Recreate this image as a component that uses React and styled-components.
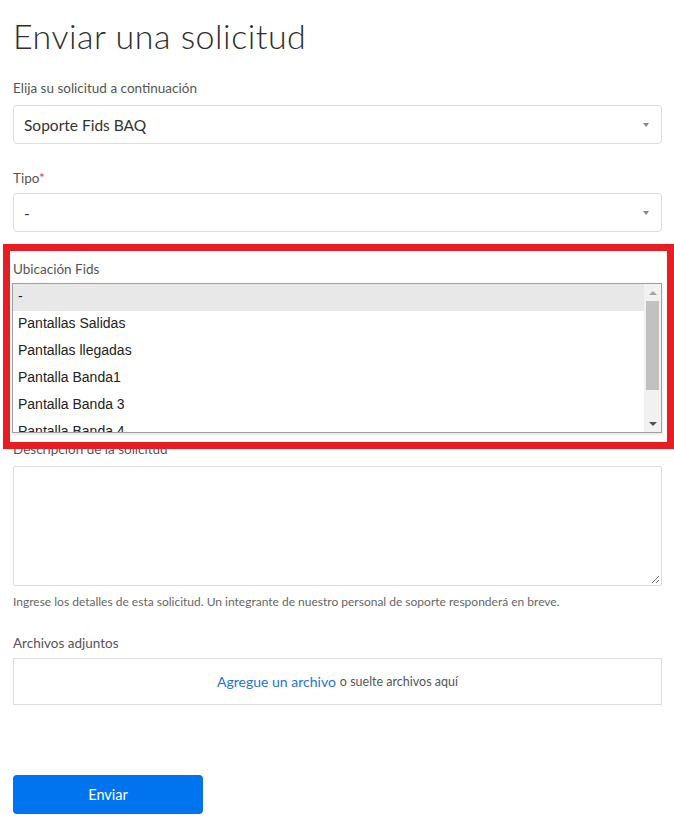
import styled, { createGlobalStyle } from 'styled-components';

const GlobalStyle = createGlobalStyle`
  * { box-sizing: border-box; }
  body {
    margin: 0;
    background: #fff;
    font-family: 'Lato', 'Open Sans', sans-serif;
    color: #333;
  }
`;

const Page = styled.div`
  position: relative;
  width: 674px;
  padding: 16px 12px 20px 13px;
`;

const Title = styled.h1`
  margin: 0 0 23px;
  font-size: 34px;
  font-weight: 300;
  letter-spacing: 0.5px;
  color: #2e2e2e;
  line-height: 40px;
`;

const Field = styled.div`
  display: flex;
  flex-direction: column;
  margin-bottom: ${(p) => p.mb || 0}px;
`;

const Label = styled.label`
  font-size: 13.5px;
  color: #555;
  line-height: 18px;
  margin-bottom: ${(p) => p.gap || 8}px;
`;

const Star = styled.span`
  color: #e23a3a;
`;

const SelectBox = styled.div`
  height: 39px;
  border: 1px solid #ddd;
  border-radius: 4px;
  display: flex;
  align-items: center;
  justify-content: space-between;
  padding: 0 12px 0 10px;
  font-size: 15.5px;
  color: #333;
`;

const Caret = styled.span`
  width: 0;
  height: 0;
  border-left: 3px solid transparent;
  border-right: 3px solid transparent;
  border-top: 4px solid #888;
`;

const ListBox = styled.div`
  display: flex;
  height: 150px;
  margin-left: -1px;
  border: 1px solid #a0a0a0;
  box-shadow: 0 1px 3px rgba(0, 0, 0, 0.15);
  font-family: 'Liberation Sans', Arial, sans-serif;
  font-size: 14px;
  color: #222;
`;

const Options = styled.div`
  flex: 1;
  overflow: hidden;
`;

const Option = styled.div`
  height: 27px;
  padding: 4px 0 0 5px;
  line-height: 16px;
  background: ${(p) => (p.selected ? '#e8e8e8' : '#fff')};
`;

const ScrollTrack = styled.div`
  width: 17px;
  background: #f1f1f1;
  display: flex;
  flex-direction: column;
  align-items: center;
`;

const Arrow = styled.div`
  height: 17px;
  width: 17px;
  display: flex;
  align-items: center;
  justify-content: center;
  &::after {
    content: '';
    border-left: 4px solid transparent;
    border-right: 4px solid transparent;
    ${(p) =>
      p.up
        ? `border-bottom: 4px solid ${p.dim ? '#a3a3a3' : '#505050'};`
        : `border-top: 4px solid ${p.dim ? '#a3a3a3' : '#505050'};`}
  }
`;

const ThumbArea = styled.div`
  flex: 1;
  width: 100%;
  padding: 0 2px;
`;

const Thumb = styled.div`
  height: 89px;
  background: #c1c1c1;
`;

const TextArea = styled.div`
  position: relative;
  height: 120px;
  border: 1px solid #ddd;
  border-radius: 2px;
`;

const Grip = styled.svg`
  position: absolute;
  right: 1px;
  bottom: 1px;
`;

const Help = styled.div`
  font-size: 12px;
  color: #666;
  margin-top: 8px;
  line-height: 16px;
`;

const Drop = styled.div`
  height: 47px;
  border: 1px solid #ddd;
  display: flex;
  align-items: center;
  justify-content: center;
  gap: 4px;
`;

const DropLink = styled.span`
  color: #1f73d6;
  font-size: 14px;
`;

const DropText = styled.span`
  color: #555;
  font-size: 12.5px;
`;

const Button = styled.button`
  width: 190px;
  height: 39px;
  border: none;
  border-radius: 4px;
  background: #0074ee;
  color: #fff;
  font-family: inherit;
  font-size: 14.5px;
`;

const Highlight = styled.div`
  position: absolute;
  left: 3px;
  top: 244px;
  width: 671px;
  height: 205px;
  border: 7px solid #e61e24;
  pointer-events: none;
`;

const options = [
  '-',
  'Pantallas Salidas',
  'Pantallas llegadas',
  'Pantalla Banda1',
  'Pantalla Banda 3',
  'Pantalla Banda 4',
];

export default function App() {
  return (
    <>
      <GlobalStyle />
      <Page>
        <Title>Enviar una solicitud</Title>
        <Field mb={25}>
          <Label gap={8}>Elija su solicitud a continuación</Label>
          <SelectBox>
            <span>Soporte Fids BAQ</span>
            <Caret />
          </SelectBox>
        </Field>
        <Field mb={28}>
          <Label gap={6}>
            Tipo<Star>*</Star>
          </Label>
          <SelectBox>
            <span>-</span>
            <Caret />
          </SelectBox>
        </Field>
        <Field mb={7}>
          <Label gap={5}>Ubicación Fids</Label>
          <ListBox>
            <Options>
              {options.map((o, i) => (
                <Option key={o} selected={i === 0}>
                  {o}
                </Option>
              ))}
            </Options>
            <ScrollTrack>
              <Arrow up dim />
              <ThumbArea>
                <Thumb />
              </ThumbArea>
              <Arrow />
            </ScrollTrack>
          </ListBox>
        </Field>
        <Field mb={24}>
          <Label gap={8}>
            Descripción de la solicitud<Star>*</Star>
          </Label>
          <TextArea>
            <Grip width="10" height="10" viewBox="0 0 10 10">
              <path d="M9 2 L2 9 M9 6 L6 9" stroke="#777" strokeWidth="1" />
            </Grip>
          </TextArea>
          <Help>
            Ingrese los detalles de esta solicitud. Un integrante de nuestro personal de soporte responderá en breve.
          </Help>
        </Field>
        <Field mb={70}>
          <Label gap={6}>Archivos adjuntos</Label>
          <Drop>
            <DropLink>Agregue un archivo</DropLink>
            <DropText>o suelte archivos aquí</DropText>
          </Drop>
        </Field>
        <Button>Enviar</Button>
        <Highlight />
      </Page>
    </>
  );
}
